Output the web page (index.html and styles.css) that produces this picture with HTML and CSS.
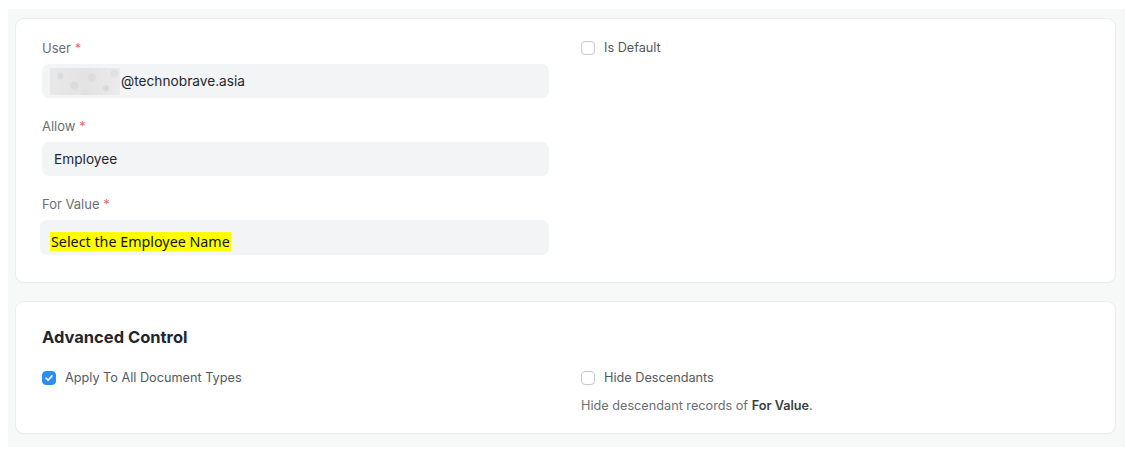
FILE: index.html
```html
<!DOCTYPE html>
<html lang="en">
<head>
  <meta charset="UTF-8" />
  <title>User Permission</title>
  <link rel="stylesheet" href="styles.css">
</head>
<body>
  <div class="page">
    <section class="card card-main">
      <div class="col">
        <div class="field">
          <label class="label">User <span class="req">*</span></label>
          <div class="control"><span class="blur"></span>@technobrave.asia</div>
        </div>
        <div class="field">
          <label class="label">Allow <span class="req">*</span></label>
          <div class="control">Employee</div>
        </div>
        <div class="field">
          <label class="label">For Value <span class="req">*</span></label>
          <div class="control control-shift"><span class="mark">Select the Employee Name</span></div>
        </div>
      </div>
      <div class="col">
        <div class="check">
          <span class="box"></span>
          <span>Is Default</span>
        </div>
      </div>
    </section>

    <section class="card card-adv">
      <h3 class="title">Advanced Control</h3>
      <div class="row">
        <div class="col">
          <div class="check">
            <span class="box box-on">
              <svg width="10" height="10" viewBox="0 0 10 10"><path d="M2 5.2 L4.1 7.2 L8 2.9" fill="none" stroke="#fff" stroke-width="1.6" stroke-linecap="round" stroke-linejoin="round"/></svg>
            </span>
            <span>Apply To All Document Types</span>
          </div>
        </div>
        <div class="col">
          <div class="check">
            <span class="box"></span>
            <span>Hide Descendants</span>
          </div>
          <p class="help">Hide descendant records of <b>For Value</b>.</p>
        </div>
      </div>
    </section>
  </div>
</body>
</html>
```

FILE: styles.css
```css
body { margin: 0; background: #fff; font-family: Inter, "Liberation Sans", sans-serif; color: #1f272e; }
.page { margin: 9px 1px 2px 8px; background: #f7f8f8; padding: 10px 10px 14px 8px; height: 438px; box-sizing: border-box; }
.card { background: #fff; border-radius: 8px; box-shadow: 0 0 0 1px #ececec, 0 1px 2px rgba(0,0,0,0.05); padding: 21px 25px 28px 26px; }
.card-main { display: grid; grid-template-columns: 507px 507px; column-gap: 32px; height: 263px; box-sizing: border-box; }
.card-adv { margin-top: 20px; height: 131px; box-sizing: border-box; padding-top: 25px; }
.col { display: flex; flex-direction: column; }
.field { display: flex; flex-direction: column; margin-bottom: 20px; }
.label { font-size: 13px; line-height: 16px; color: #6b6f73; margin-bottom: 8px; }
.req { color: #e86c6c; }
.control { height: 34px; background: #f3f4f6; border-radius: 7px; display: flex; align-items: center; padding: 0 12px 0 8px; font-size: 13.7px; color: #1f272e; box-sizing: border-box; }
.field + .field .control { padding-left: 12px; }
.control-shift { margin-left: -2px; padding-left: 10px !important; height: 35px; padding-top: 8px; }
.blur { width: 70px; height: 27px; margin-right: 1px; background:
  radial-gradient(circle at 15% 30%, #d9d9d9 0 2px, transparent 4px),
  radial-gradient(circle at 35% 65%, #dadada 0 3px, transparent 5px),
  radial-gradient(circle at 60% 35%, #dcdcdc 0 3px, transparent 5px),
  radial-gradient(circle at 80% 75%, #d8d8d8 0 2px, transparent 4px),
  radial-gradient(circle at 92% 20%, #e0e0e0 0 3px, transparent 5px),
  radial-gradient(circle at 50% 90%, #e0e0e0 0 2px, transparent 4px),
  linear-gradient(90deg, #e8e8e8, #e3e3e3 50%, #ebebeb); }
.mark { background: #ffff00; font-family: "Noto Sans", "Open Sans", sans-serif; font-size: 14.3px; line-height: 19px; color: #111; padding: 0 1px; }
.check { display: flex; align-items: center; gap: 9px; font-size: 12.7px; line-height: 16px; color: #525a60; }
.box { width: 14px; height: 14px; border: 1px solid #c6c9cc; border-radius: 4px; box-sizing: border-box; display: flex; align-items: center; justify-content: center; background: #fff; }
.box-on { background: #2c8ef0; border-color: #2c8ef0; }
.title { margin: 0 0 23px; font-size: 16.5px; line-height: 20px; font-weight: 700; color: #1f272e; }
.row { display: grid; grid-template-columns: 507px 507px; column-gap: 32px; }
.help { margin: 12px 0 0; font-size: 12.7px; line-height: 16px; color: #6b6f73; }
.help b { color: #383d42; font-weight: 600; }
```
